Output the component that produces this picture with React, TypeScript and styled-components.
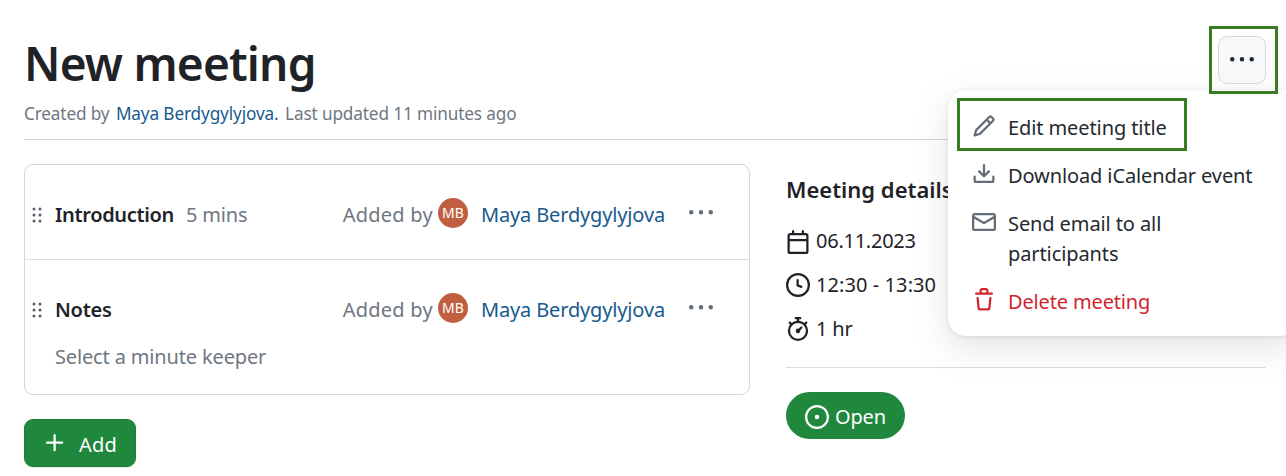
import React from 'react';
import styled, { createGlobalStyle } from 'styled-components';

const GlobalStyle = createGlobalStyle`
  *, *::before, *::after { box-sizing: border-box; }
  html, body { margin: 0; height: 476px; overflow: hidden; background: #fff; }
  body { font: 400 20px/30px 'Noto Sans', 'Open Sans', sans-serif; color: #1f2328; }
  h1, h2 { margin: 0; }
  button { font: inherit; }
`;

const paths = {
  pencil: 'M11.013 1.427a1.75 1.75 0 0 1 2.474 0l1.086 1.086a1.75 1.75 0 0 1 0 2.474l-8.61 8.61c-.21.21-.47.364-.756.445l-3.251.93a.75.75 0 0 1-.927-.928l.929-3.25c.081-.286.235-.547.445-.758l8.61-8.61Zm.176 4.823L9.75 4.81l-6.286 6.287a.253.253 0 0 0-.064.108l-.558 1.953 1.953-.558a.253.253 0 0 0 .108-.064Zm1.238-3.763a.25.25 0 0 0-.354 0L10.811 3.75l1.439 1.44 1.263-1.263a.25.25 0 0 0 0-.354Z',
  download: 'M2.75 14A1.75 1.75 0 0 1 1 12.25v-2.5a.75.75 0 0 1 1.5 0v2.5c0 .138.112.25.25.25h10.5a.25.25 0 0 0 .25-.25v-2.5a.75.75 0 0 1 1.5 0v2.5A1.75 1.75 0 0 1 13.25 14ZM7.25 7.689V2a.75.75 0 0 1 1.5 0v5.689l1.97-1.969a.749.749 0 1 1 1.06 1.06l-3.25 3.25a.749.749 0 0 1-1.06 0L4.22 6.78a.749.749 0 1 1 1.06-1.06l1.97 1.969Z',
  mail: 'M1.75 2h12.5c.966 0 1.75.784 1.75 1.75v8.5A1.75 1.75 0 0 1 14.25 14H1.75A1.75 1.75 0 0 1 0 12.25v-8.5C0 2.784.784 2 1.75 2ZM1.5 12.251c0 .138.112.25.25.25h12.5a.25.25 0 0 0 .25-.25V5.809L8.38 9.397a.75.75 0 0 1-.76 0L1.5 5.809v6.442Zm13-8.181v-.32a.25.25 0 0 0-.25-.25H1.75a.25.25 0 0 0-.25.25v.32L8 7.88Z',
  trash: 'M11 1.75V3h2.25a.75.75 0 0 1 0 1.5H2.75a.75.75 0 0 1 0-1.5H5V1.75C5 .784 5.784 0 6.75 0h2.5C10.216 0 11 .784 11 1.75ZM4.496 6.675l.66 6.6a.25.25 0 0 0 .249.225h5.19a.25.25 0 0 0 .249-.225l.66-6.6a.75.75 0 0 1 1.492.149l-.66 6.6A1.748 1.748 0 0 1 10.595 15h-5.19a1.75 1.75 0 0 1-1.741-1.575l-.66-6.6a.75.75 0 1 1 1.492-.15ZM6.5 1.75V3h3V1.75a.25.25 0 0 0-.25-.25h-2.5a.25.25 0 0 0-.25.25Z',
  calendar: 'M4.75 0a.75.75 0 0 1 .75.75V2h5V.75a.75.75 0 0 1 1.5 0V2h1.25c.966 0 1.75.784 1.75 1.75v10.5A1.75 1.75 0 0 1 13.25 16H2.75A1.75 1.75 0 0 1 1 14.25V3.75C1 2.784 1.784 2 2.75 2H4V.75A.75.75 0 0 1 4.75 0ZM2.5 7.5v6.75c0 .138.112.25.25.25h10.5a.25.25 0 0 0 .25-.25V7.5Zm10.75-4H2.75a.25.25 0 0 0-.25.25V6h11V3.75a.25.25 0 0 0-.25-.25Z',
  clock: 'M8 0a8 8 0 1 1 0 16A8 8 0 0 1 8 0ZM1.5 8a6.5 6.5 0 1 0 13 0 6.5 6.5 0 0 0-13 0Zm7-3.25v2.992l2.028.812a.75.75 0 0 1-.557 1.392l-2.5-1A.751.751 0 0 1 7 8.25v-3.5a.75.75 0 0 1 1.5 0Z',
  stopwatch: 'M5.75.75A.75.75 0 0 1 6.5 0h3a.75.75 0 0 1 0 1.5h-.75v1l-.001.041a6.724 6.724 0 0 1 3.464 1.435l.007-.006.75-.75a.749.749 0 0 1 1.275.326.749.749 0 0 1-.215.734l-.75.75-.006.007a6.75 6.75 0 1 1-10.548 0L2.72 5.03l-.75-.75a.751.751 0 0 1 .018-1.042.751.751 0 0 1 1.042-.018l.75.75.007.006A6.72 6.72 0 0 1 7.25 2.541V1.5H6.5a.75.75 0 0 1-.75-.75ZM8 14.5a5.25 5.25 0 1 0-.001-10.501A5.25 5.25 0 0 0 8 14.5Zm.389-6.7 1.33-1.33a.75.75 0 1 1 1.061 1.06L9.45 8.861A1.503 1.503 0 0 1 8 10.75a1.499 1.499 0 1 1 .389-2.95Z',
  open: 'M8 9.5a1.5 1.5 0 1 0 0-3 1.5 1.5 0 0 0 0 3ZM8 0a8 8 0 1 1 0 16A8 8 0 0 1 8 0ZM1.5 8a6.5 6.5 0 1 0 13 0 6.5 6.5 0 0 0-13 0Z',
  kebab: 'M8 9a1.5 1.5 0 1 0 0-3 1.5 1.5 0 0 0 0 3ZM1.5 9a1.5 1.5 0 1 0 0-3 1.5 1.5 0 0 0 0 3Zm13 0a1.5 1.5 0 1 0 0-3 1.5 1.5 0 0 0 0 3Z',
  grabber: 'M10 13a1 1 0 1 1 0-2 1 1 0 0 1 0 2Zm0-4a1 1 0 1 1 0-2 1 1 0 0 1 0 2Zm-4 4a1 1 0 1 1 0-2 1 1 0 0 1 0 2Zm5-9a1 1 0 1 1-2 0 1 1 0 0 1 2 0ZM7 8a1 1 0 1 1-2 0 1 1 0 0 1 2 0ZM6 5a1 1 0 1 1 0-2 1 1 0 0 1 0 2Z',
  plus: 'M7.75 2a.75.75 0 0 1 .75.75V7h4.25a.75.75 0 0 1 0 1.5H8.5v4.25a.75.75 0 0 1-1.5 0V8.5H2.75a.75.75 0 0 1 0-1.5H7V2.75A.75.75 0 0 1 7.75 2Z',
};

const Svg = styled.svg`
  display: block;
  flex: none;
  width: 24px;
  height: 24px;
  fill: currentColor;
`;

const Icon = ({ name }: { name: keyof typeof paths }) => (
  <Svg viewBox="0 0 16 16" aria-hidden="true"><path d={paths[name]} /></Svg>
);

const Text = styled.span<{ $spacing?: number }>`
  white-space: nowrap;
  letter-spacing: ${(p) => p.$spacing ?? -0.15}px;
`;

const Muted = styled(Text)` color: #6e7781; `;
const Strong = styled(Text)` font-weight: 580; `;
const Link = styled(Text)` color: #175a8e; `;

const Page = styled.main`
  width: 1286px;
  height: 476px;
  padding: 36px 20px 0 24px;
  position: relative;
  overflow: hidden;
`;

const Header = styled.header`
  height: 104px;
  border-bottom: 1px solid #d0d7de;
  display: flex;
  justify-content: space-between;
  align-items: flex-start;
`;

const Title = styled.h1`
  font-size: 46px;
  line-height: 54px;
  font-weight: 580;
  letter-spacing: -0.8px;
`;

const Meta = styled.p`
  margin: 12px 0 0;
  font-size: 17.2px;
  line-height: 24px;
  display: flex;
  gap: 6.5px;
`;

const Outline = styled.i`
  position: absolute;
  border: 3px solid #377e22;
  pointer-events: none;
`;

const MoreButton = styled.button`
  width: 48px;
  height: 48px;
  padding: 0 0 0 11px;
  position: relative;
  z-index: 3;
  border: 1px solid #d5d8dc;
  border-radius: 9px;
  background: #f6f8fa;
  color: #24292f;
  ${Outline} { left: -10px; top: -11px; width: 69px; height: 68px; }
`;

const Columns = styled.div`
  display: grid;
  grid-template-columns: 726px 480px;
  column-gap: 36px;
  padding-top: 24px;
`;

const Agenda = styled.section`
  border: 1px solid #d0d7de;
  border-radius: 9px;
`;

const AgendaItem = styled.article`
  padding: 35px 36px 0 0;
  height: 134px;
  & + & { border-top: 1px solid #d8dee4; height: 135px; }
  &:first-child { height: 94px; }
`;

const ItemRow = styled.div`
  display: flex;
  align-items: flex-start;
  height: 30px;
`;

const Grip = styled.span`
  width: 30px;
  padding-top: 3px;
  color: #57606a;
`;

const ItemTitle = styled.div`
  display: flex;
  flex: 1;
  gap: 12px;
`;

const Author = styled.div`
  display: flex;
  align-items: flex-start;
`;

const Avatar = styled.span`
  width: 30px;
  height: 30px;
  margin: -2px 13px 0 5px;
  border-radius: 50%;
  background: #bf5f40;
  color: #fff;
  font-size: 14px;
  line-height: 29px;
  text-align: center;
`;

const RowMenu = styled.span`
  margin: 1px 0 0 24px;
  color: #656d76;
`;

const Keeper = styled.div` padding: 17px 0 0 30px; `;

const AddButton = styled.button`
  margin-top: 24px;
  width: 112px;
  height: 48px;
  padding: 0 0 0 18px;
  display: flex;
  align-items: center;
  gap: 12px;
  border: 1px solid #1f7f3a;
  border-radius: 9px;
  background: #1f883d;
  color: #fff;
  box-shadow: 0 1px 1px rgba(27, 31, 36, 0.12);
  ${Text} { padding-top: 3px; }
`;

const Details = styled.section`
  padding-top: 10px;
`;

const DetailsTitle = styled.h2`
  font-size: 22px;
  line-height: 30px;
  font-weight: 580;
`;

const Facts = styled.ul`
  list-style: none;
  margin: 0;
  padding: 22px 0 23px;
  border-bottom: 1px solid #d8dee4;
`;

const Fact = styled.li`
  display: flex;
  height: 43.5px;
  gap: 6px;
  ${Svg} { margin-top: 3.5px; }
  &:last-child { height: 31px; padding-top: 0.5px; }
`;

const Status = styled.span`
  margin-top: 24px;
  width: 119px;
  height: 47px;
  padding: 2px 0 0 19px;
  display: flex;
  align-items: center;
  gap: 6px;
  border-radius: 24px;
  background: #1f883d;
  color: #fff;
`;

const Menu = styled.ul`
  position: absolute;
  left: 948px;
  top: 90px;
  width: 350px;
  height: 246px;
  margin: 0;
  padding: 14px 12px 12px;
  list-style: none;
  z-index: 2;
  border-radius: 18px;
  background: #fff;
  box-shadow: 0 1px 4px rgba(66, 74, 83, 0.14), 0 12px 36px rgba(66, 74, 83, 0.15);
`;

const MenuItem = styled.li<{ $danger?: boolean }>`
  position: relative;
  display: flex;
  gap: 12px;
  padding: 9px 12px;
  color: ${(p) => (p.$danger ? '#d1242f' : '#24292f')};
  ${Svg} { margin-top: 1px; color: ${(p) => (p.$danger ? '#d1242f' : '#656d76')}; }
  ${Outline} { left: -3px; top: -6px; width: 230px; height: 53px; }
`;

const MenuText = styled(Text)`
  white-space: normal;
  max-width: 250px;
`;

const agenda = [
  { title: 'Introduction', duration: '5 mins', titleSpacing: -0.35 },
  { title: 'Notes', note: 'Select a minute keeper', titleSpacing: -0.25 },
];

export default function App() {
  return (
    <Page>
      <GlobalStyle />
      <Header>
        <div>
          <Title>New meeting</Title>
          <Meta>
            <Muted>Created by</Muted>
            <Link $spacing={-0.13}>Maya Berdygylyjova.</Link>
            <Muted $spacing={-0.13}>Last updated 11 minutes ago</Muted>
          </Meta>
        </div>
        <MoreButton aria-label="More"><Icon name="kebab" /><Outline /></MoreButton>
      </Header>
      <Columns>
        <div>
          <Agenda>
            {agenda.map((item) => (
              <AgendaItem key={item.title}>
                <ItemRow>
                  <Grip><Icon name="grabber" /></Grip>
                  <ItemTitle>
                    <Strong $spacing={item.titleSpacing}>{item.title}</Strong>
                    {item.duration && <Muted>{item.duration}</Muted>}
                  </ItemTitle>
                  <Author>
                    <Muted $spacing={0.25}>Added by</Muted>
                    <Avatar>MB</Avatar>
                    <Link>Maya Berdygylyjova</Link>
                  </Author>
                  <RowMenu><Icon name="kebab" /></RowMenu>
                </ItemRow>
                {item.note && <Keeper><Muted>{item.note}</Muted></Keeper>}
              </AgendaItem>
            ))}
          </Agenda>
          <AddButton><Icon name="plus" /><Text $spacing={0.2}>Add</Text></AddButton>
        </div>
        <Details>
          <DetailsTitle>Meeting details</DetailsTitle>
          <Facts>
            <Fact><Icon name="calendar" /><Text $spacing={-0.25}>06.11.2023</Text></Fact>
            <Fact><Icon name="clock" /><Text $spacing={0.08}>12:30 - 13:30</Text></Fact>
            <Fact><Icon name="stopwatch" /><Text>1 hr</Text></Fact>
          </Facts>
          <Status><Icon name="open" /><Text>Open</Text></Status>
        </Details>
      </Columns>
      <Menu>
        <MenuItem><Icon name="pencil" /><MenuText $spacing={-0.1}>Edit meeting title</MenuText><Outline /></MenuItem>
        <MenuItem><Icon name="download" /><MenuText $spacing={-0.11}>Download iCalendar event</MenuText></MenuItem>
        <MenuItem><Icon name="mail" /><MenuText $spacing={-0.1}>Send email to all<br />participants</MenuText></MenuItem>
        <MenuItem $danger><Icon name="trash" /><MenuText>Delete meeting</MenuText></MenuItem>
      </Menu>
    </Page>
  );
}
